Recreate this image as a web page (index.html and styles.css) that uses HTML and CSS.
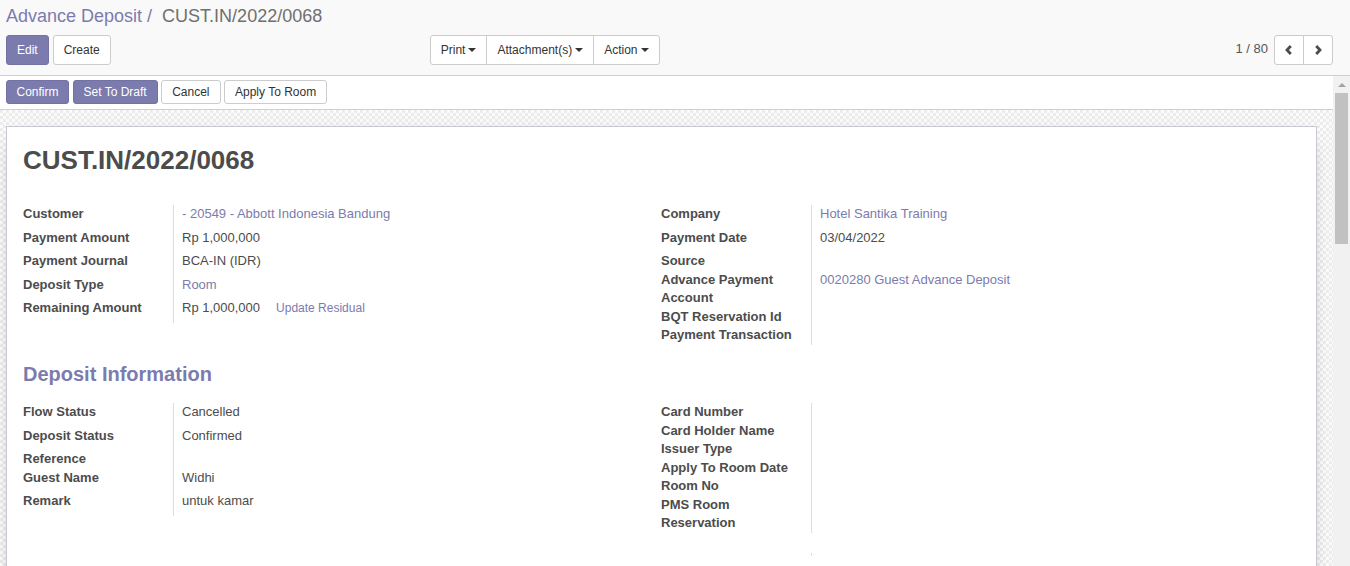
FILE: index.html
```html
<!DOCTYPE html>
<html>
<head>
<meta charset="utf-8">
<link rel="stylesheet" href="styles.css">
</head>
<body>
<div class="control-panel">
  <ol class="breadcrumb">
    <li class="bc-link">Advance Deposit</li>
    <li class="bc-active"><span class="bc-sep">/&nbsp;</span>CUST.IN/2022/0068</li>
  </ol>
  <div class="cp-row">
    <div class="cp-left">
      <div class="cp-buttons">
        <button class="btn btn-primary">Edit</button>
        <button class="btn">Create</button>
      </div>
      <div class="btn-group sidebar">
        <button class="btn">Print <span class="caret"></span></button>
        <button class="btn">Attachment(s) <span class="caret"></span></button>
        <button class="btn">Action <span class="caret"></span></button>
      </div>
    </div>
    <div class="cp-right">
      <span class="pager-value">1 / 80</span>
      <div class="btn-group pager-btns">
        <button class="btn btn-icon"><svg width="10" height="12" viewBox="0 0 10 12"><path d="M6.8 2 L3 6 L6.8 10" fill="none" stroke="#4c4c4c" stroke-width="2.8"/></svg></button>
        <button class="btn btn-icon"><svg width="10" height="12" viewBox="0 0 10 12"><path d="M3.2 2 L7 6 L3.2 10" fill="none" stroke="#4c4c4c" stroke-width="2.8"/></svg></button>
      </div>
    </div>
  </div>
</div>
<div class="content">
  <div class="main">
    <div class="statusbar">
      <button class="btn btn-sm btn-primary btn-first">Confirm</button>
      <button class="btn btn-sm btn-primary">Set To Draft</button>
      <button class="btn btn-sm">Cancel</button>
      <button class="btn btn-sm">Apply To Room</button>
    </div>
    <div class="sheet-bg">
      <div class="sheet">
        <h1 class="title">CUST.IN/2022/0068</h1>
        <div class="groups">
          <div class="group">
            <div class="lbl">Customer</div><div class="val"><span class="v link">- 20549 - Abbott Indonesia Bandung</span></div>
            <div class="lbl">Payment Amount</div><div class="val"><span class="v">Rp 1,000,000</span></div>
            <div class="lbl">Payment Journal</div><div class="val"><span class="v">BCA-IN (IDR)</span></div>
            <div class="lbl">Deposit Type</div><div class="val"><span class="v link">Room</span></div>
            <div class="lbl">Remaining Amount</div><div class="val"><span class="v">Rp 1,000,000</span><span class="btn-link">Update Residual</span></div>
          </div>
          <div class="group">
            <div class="lbl">Company</div><div class="val"><span class="v link">Hotel Santika Training</span></div>
            <div class="lbl">Payment Date</div><div class="val"><span class="v">03/04/2022</span></div>
            <div class="lbl">Source</div><div class="val"></div>
            <div class="lbl">Advance Payment Account</div><div class="val"><span class="v link">0020280 Guest Advance Deposit</span></div>
            <div class="lbl">BQT Reservation Id</div><div class="val"></div>
            <div class="lbl">Payment Transaction</div><div class="val"></div>
          </div>
        </div>
        <h2 class="separator">Deposit Information</h2>
        <div class="groups">
          <div class="group">
            <div class="lbl">Flow Status</div><div class="val"><span class="v">Cancelled</span></div>
            <div class="lbl">Deposit Status</div><div class="val"><span class="v">Confirmed</span></div>
            <div class="lbl">Reference</div><div class="val"></div>
            <div class="lbl">Guest Name</div><div class="val"><span class="v">Widhi</span></div>
            <div class="lbl">Remark</div><div class="val"><span class="v">untuk kamar</span></div>
          </div>
          <div class="group">
            <div class="lbl">Card Number</div><div class="val"></div>
            <div class="lbl">Card Holder Name</div><div class="val"></div>
            <div class="lbl">Issuer Type</div><div class="val"></div>
            <div class="lbl">Apply To Room Date</div><div class="val"></div>
            <div class="lbl">Room No</div><div class="val"></div>
            <div class="lbl">PMS Room Reservation</div><div class="val"></div>
          </div>
        </div>
        <div class="groups groups-next">
          <div class="group"></div>
          <div class="group"><div class="lbl"></div><div class="val"></div></div>
        </div>
      </div>
    </div>
  </div>
  <div class="scrollbar">
    <div class="sb-arrow"><span class="sb-tri"></span></div>
    <div class="sb-thumb"></div>
  </div>
</div>
</body>
</html>
```

FILE: styles.css
```css
* { box-sizing: border-box; }
html, body {
  margin: 0;
  padding: 0;
  height: 566px;
  overflow: hidden;
}
body {
  font-family: "Liberation Sans", Arial, Helvetica, sans-serif;
  font-size: 13px;
  line-height: 1.42857;
  color: #4c4c4c;
  background: #fff;
  display: flex;
  flex-direction: column;
}

/* control panel */
.control-panel {
  background: #f9f9f9;
  border-bottom: 1px solid #cfcfcf;
  height: 76px;
  padding: 4px 17px 0 6px;
  flex: none;
}
.breadcrumb {
  list-style: none;
  margin: 0;
  padding: 0;
  display: flex;
  font-size: 18px;
  line-height: 24px;
  white-space: pre;
}
.bc-link { color: #7c7bad; }
.bc-active { color: #6f6f6f; }
.bc-sep { color: #7c7bad; padding: 0 0 0 5px; margin-right: 5px; }

.cp-row {
  display: flex;
  margin-top: 7px;
}
.cp-left {
  flex: 0 0 50%;
  display: flex;
  align-items: flex-start;
}
.cp-buttons { display: flex; gap: 4px; }
.sidebar { margin-left: auto; margin-right: 10px; }
.cp-right {
  flex: 0 0 50%;
  display: flex;
  justify-content: flex-end;
  align-items: flex-start;
}
.pager-value {
  line-height: 27px;
  margin-right: 6px;
  color: #555;
}

.btn {
  font-family: inherit;
  font-size: 12px;
  line-height: 18px;
  padding: 5px 10px;
  border: 1px solid #ccc;
  border-radius: 3px;
  background: #fff;
  color: #333;
  margin: 0;
  cursor: pointer;
  white-space: nowrap;
  display: inline-flex;
  align-items: center;
}
.btn-primary {
  background: #7c7bad;
  border-color: #7372a4;
  color: #fff;
}
.btn-sm { padding: 2px 10px; }
.btn-sm.btn-first { padding: 2px 9.5px; }
.btn-group { display: flex; }
.btn-group .btn { border-radius: 0; }
.btn-group .btn + .btn { margin-left: -1px; }
.btn-group .btn:first-child { border-radius: 3px 0 0 3px; }
.btn-group .btn:last-child { border-radius: 0 3px 3px 0; }
.caret {
  display: inline-block;
  width: 0;
  height: 0;
  margin-left: 3px;
  border-top: 4px solid #333;
  border-left: 4px solid transparent;
  border-right: 4px solid transparent;
}
.btn-icon {
  width: 30px;
  height: 30px;
  padding: 0;
  justify-content: center;
}

/* content */
.content {
  flex: 1;
  display: flex;
  min-height: 0;
}
.main {
  flex: 1;
  display: flex;
  flex-direction: column;
  min-width: 0;
  overflow: hidden;
}
.statusbar {
  background: #fff;
  border-bottom: 1px solid #cfcfcf;
  height: 34px;
  padding: 4px 6px 0;
  display: flex;
  gap: 3.5px;
  align-items: flex-start;
  flex: none;
}
.sheet-bg {
  flex: 1;
  padding: 16px 16px 0 6px;
  background-color: #f4f4f4;
  background-image: conic-gradient(#fbfbfb 25%, #ececec 0 50%, #fbfbfb 0 75%, #ececec 0);
  background-size: 6px 6px;
  overflow: hidden;
}
.sheet {
  background: #fff;
  border: 1px solid #c8c8d3;
  box-shadow: 0 5px 20px -15px #000;
  padding: 16px 16px 40px;
  min-height: 520px;
}
.title {
  margin: 0 0 28px;
  font-size: 26px;
  line-height: 34px;
  font-weight: bold;
  color: #4c4c4c;
}
.groups {
  display: grid;
  grid-template-columns: 638px 1fr;
  align-items: start;
}
.group {
  display: grid;
  grid-template-columns: 151px 1fr;
}
.lbl {
  font-weight: bold;
  padding-right: 15px;
  border-right: 1px solid #ddd;
}
.val {
  padding-left: 8px;
}
.v {
  display: inline-block;
  margin-bottom: 5px;
}
.link { color: #7c7bad; }
.btn-link {
  color: #7c7bad;
  font-size: 12px;
  margin-left: 16px;
}
.separator {
  margin: 17px 0 17px;
  font-size: 20px;
  line-height: 24px;
  font-weight: bold;
  color: #7c7bad;
}
.groups-next { margin-top: 20px; }
.groups-next .lbl { height: 3px; }

/* scrollbar */
.scrollbar {
  flex: 0 0 17px;
  background: #f1f1f1;
  display: flex;
  flex-direction: column;
  align-items: center;
}
.sb-arrow {
  height: 17px;
  width: 17px;
  display: flex;
  align-items: center;
  justify-content: center;
}
.sb-tri {
  width: 0;
  height: 0;
  border-bottom: 4px solid #a3a3a3;
  border-left: 4px solid transparent;
  border-right: 4px solid transparent;
}
.sb-thumb {
  width: 13px;
  height: 151px;
  background: #c1c1c1;
}
```
